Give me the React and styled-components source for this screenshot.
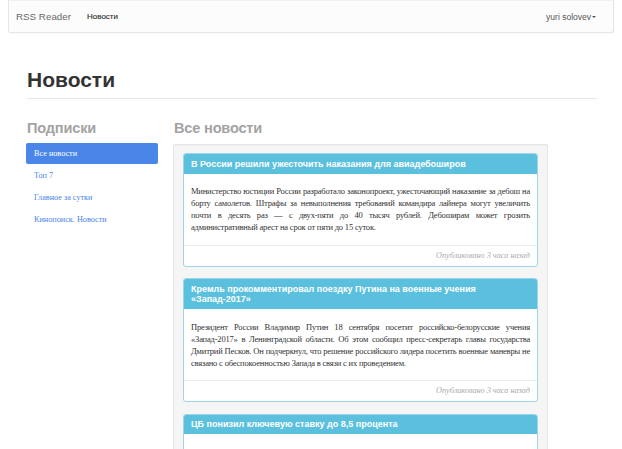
import React from 'react'
import styled, { createGlobalStyle } from 'styled-components'

const GlobalStyle = createGlobalStyle`
    *, *::before, *::after {
        box-sizing: border-box;
    }
    body {
        margin: 0;
        background: #fff;
        font-family: "Liberation Sans", Arial, sans-serif;
        color: #333;
    }
`

const subscriptions = ['Все новости', 'Топ 7', 'Главное за сутки', 'Кинопоиск. Новости']

const news = [
    {
        title: 'В России решили ужесточить наказания для авиадебоширов',
        text: 'Министерство юстиции России разработало законопроект, ужесточающий наказание за дебош на борту самолетов. Штрафы за невыполнения требований командира лайнера могут увеличить почти в десять раз — с двух-пяти до 40 тысяч рублей. Дебоширам может грозить административный арест на срок от пяти до 15 суток.',
        date: 'Опубликовано 3 часа назад'
    },
    {
        title: 'Кремль прокомментировал поездку Путина на военные учения «Запад-2017»',
        text: 'Президент России Владимир Путин 18 сентября посетит российско-белорусские учения «Запад-2017» в Ленинградской области. Об этом сообщил пресс-секретарь главы государства Дмитрий Песков. Он подчеркнул, что решение российского лидера посетить военные маневры не связано с обеспокоенностью Запада в связи с их проведением.',
        date: 'Опубликовано 3 часа назад'
    },
    {
        title: 'ЦБ понизил ключевую ставку до 8,5 процента',
        text: 'Совет директоров Банка России принял решение снизить ключевую ставку на 50 базисных пунктов, до 8,5 процента годовых.',
        date: 'Опубликовано 4 часа назад'
    }
]

function App() {
    return (
        <>
            <GlobalStyle />
            <Navbar>
                <Brand>RSS Reader</Brand>
                <NavLink>Новости</NavLink>
                <UserMenu>
                    yuri solovev
                    <Caret />
                </UserMenu>
            </Navbar>

            <Container>
                <PageHeader>Новости</PageHeader>

                <Row>
                    <Sidebar>
                        <SectionTitle>Подписки</SectionTitle>
                        <Pills>
                            {subscriptions.map((name, i) => (
                                <Pill key={name} active={i === 0}>{name}</Pill>
                            ))}
                        </Pills>
                    </Sidebar>

                    <Main>
                        <SectionTitle>Все новости</SectionTitle>
                        <Well>
                            {news.map(item => (
                                <Panel key={item.title}>
                                    <PanelHeading>{item.title}</PanelHeading>
                                    <PanelBody>{item.text}</PanelBody>
                                    <PanelFooter>{item.date}</PanelFooter>
                                </Panel>
                            ))}
                        </Well>
                    </Main>
                </Row>
            </Container>
        </>
    )
}

const Navbar = styled.nav`
    display: flex;
    align-items: center;
    height: 33px;
    margin: 0 8px;
    padding: 0 17px 0 7px;
    background: #fcfcfc;
    border: 1px solid #e6e6e6;
    border-top-color: #f0f0f0;
    border-radius: 0 0 3px 3px;
    box-shadow: 0 1px 2px rgba(0, 0, 0, 0.04);
`

const Brand = styled.span`
    font-size: 9.8px;
    color: #6a6a6a;
    margin-right: 16px;
`

const NavLink = styled.span`
    font-size: 8px;
    color: #333;
    -webkit-text-stroke: 0.15px #333;
`

const UserMenu = styled.span`
    display: flex;
    align-items: center;
    margin-left: auto;
    font-size: 8.5px;
    color: #555;
`

const Caret = styled.span`
    margin-left: 1px;
    margin-top: 1px;
    width: 0;
    height: 0;
    border-left: 2px solid transparent;
    border-right: 2px solid transparent;
    border-top: 2px solid #555;
`

const Container = styled.div`
    width: 570px;
    margin-left: 27px;
`

const PageHeader = styled.h1`
    margin: 35px 0 0;
    padding-bottom: 7px;
    border-bottom: 1px solid #e8e8e8;
    font-size: 21px;
    line-height: 23px;
    font-weight: bold;
    color: #333;
`

const Row = styled.div`
    display: flex;
    gap: 15px;
    margin-top: 21px;
`

const Sidebar = styled.div`
    width: 132px;
    margin-left: -1px;
`

const Main = styled.div`
    width: 375px;
`

const SectionTitle = styled.h3`
    margin: 0 0 6px 1px;
    font-size: 14.6px;
    line-height: 17px;
    letter-spacing: -0.2px;
    font-weight: bold;
    color: #a3a3a3;
`

const Pills = styled.div`
    display: flex;
    flex-direction: column;
    gap: 1px;
`

const Pill = styled.div`
    height: 21px;
    line-height: 21px;
    padding: 0 8px;
    border-radius: 2px;
    font-family: "Liberation Serif", "Times New Roman", serif;
    font-size: 8.2px;
    color: ${p => (p.active ? '#fff' : '#4a86e8')};
    background: ${p => (p.active ? '#4a86e8' : 'transparent')};
`

const Well = styled.div`
    margin-top: 7px;
    padding: 8px 9px;
    background: #f5f5f5;
    border: 1px solid #e6e6e6;
    border-radius: 2px;
    box-shadow: inset 0 1px 1px rgba(0, 0, 0, 0.03);
`

const Panel = styled.div`
    margin-bottom: 11.5px;
    background: #fff;
    border: 1px solid #9fd5ea;
    border-radius: 3px;
    overflow: hidden;
`

const PanelHeading = styled.div`
    padding: 4.5px 7px;
    background: #5bc0de;
    color: #fff;
    font-size: 9px;
    line-height: 10.5px;
    font-weight: bold;
`

const PanelBody = styled.div`
    padding: 11.5px 7px;
    font-family: "Liberation Serif", "Times New Roman", serif;
    font-size: 8.5px;
    letter-spacing: -0.19px;
    line-height: 12px;
    text-align: justify;
    color: #333;
`

const PanelFooter = styled.div`
    padding: 5px 7px;
    border-top: 1px solid #ececec;
    font-family: "Liberation Serif", "Times New Roman", serif;
    font-style: italic;
    font-size: 8.2px;
    line-height: 10px;
    text-align: right;
    color: #ababab;
`

export default App
